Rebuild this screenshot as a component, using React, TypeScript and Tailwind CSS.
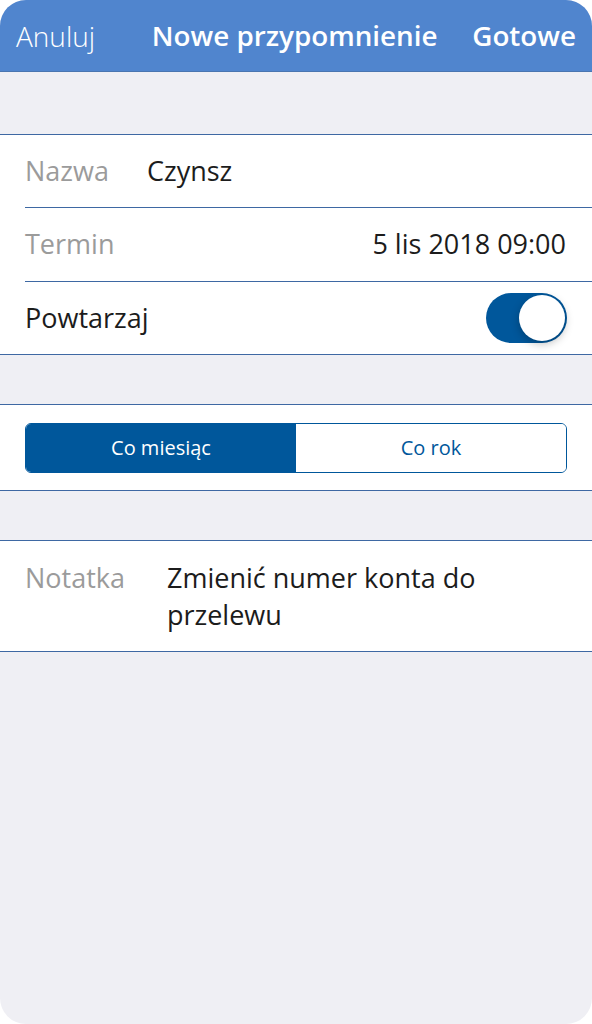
import React from "react";

export default function App() {
  return (
    <div className="w-[592px] h-[1024px] bg-white">
      <div
        className="w-[592px] h-[1024px] rounded-[26px] overflow-hidden bg-[#efeff4] flex flex-col"
        style={{ fontFamily: '"Open Sans", "Noto Sans", sans-serif' }}
      >
        {/* Header */}
        <div className="h-[72px] bg-[#5085ce] flex items-center justify-between px-[16px] border-b border-[#4a75b0] shrink-0">
          <span className="text-[28px] font-light text-white">Anuluj</span>
          <span className="text-[27.8px] font-semibold text-white ml-[22px]">Nowe przypomnienie</span>
          <span className="text-[27.8px] font-semibold text-white">Gotowe</span>
        </div>

        <div className="h-[62px] shrink-0" />

        {/* Form group */}
        <div className="bg-white border-t border-b border-[#3e68a3]">
          <div className="h-[72px] flex items-center pl-[25px] pr-[26px]">
            <span className="text-[27px] text-[#9b9b9b] w-[122px]">Nazwa</span>
            <span className="text-[27px] text-[#1c1c1c]">Czynsz</span>
          </div>
          <div className="ml-[25px] h-px bg-[#3e68a3]" />
          <div className="h-[73px] flex items-center justify-between pl-[25px] pr-[26px]">
            <span className="text-[27px] text-[#9b9b9b]">Termin</span>
            <span className="text-[27px] text-[#1c1c1c]">5 lis 2018 09:00</span>
          </div>
          <div className="ml-[25px] h-px bg-[#3e68a3]" />
          <div className="h-[72px] flex items-center justify-between pl-[25px] pr-[25px]">
            <span className="text-[27px] text-[#1c1c1c]">Powtarzaj</span>
            <div className="w-[81px] h-[50px] rounded-full bg-[#00579b] relative">
              <div className="absolute right-[2px] top-[2px] w-[46px] h-[46px] rounded-full bg-white shadow-[0_3px_8px_rgba(0,0,0,0.25)]" />
            </div>
          </div>
        </div>

        <div className="h-[49px] shrink-0" />

        {/* Segmented */}
        <div className="bg-white border-t border-b border-[#3e68a3] h-[87px] flex items-center px-[25px]">
          <div className="flex w-full h-[50px] rounded-[6px] border-[1.5px] border-[#00579b] overflow-hidden">
            <div className="flex-1 bg-[#00579b] flex items-center justify-center text-[20px] text-white">
              Co miesiąc
            </div>
            <div className="flex-1 bg-white flex items-center justify-center text-[20px] text-[#00579b]">
              Co rok
            </div>
          </div>
        </div>

        <div className="h-[49px] shrink-0" />

        {/* Note */}
        <div className="bg-white border-t border-b border-[#3e68a3] h-[112px] flex pl-[25px] pr-[25px] pt-[18px]">
          <span className="text-[27px] text-[#9b9b9b] w-[142px] shrink-0 leading-[37px]">Notatka</span>
          <span className="text-[27px] text-[#1c1c1c] leading-[37px] flex-1">
            Zmienić numer konta do przelewu
          </span>
        </div>
      </div>
    </div>
  );
}
